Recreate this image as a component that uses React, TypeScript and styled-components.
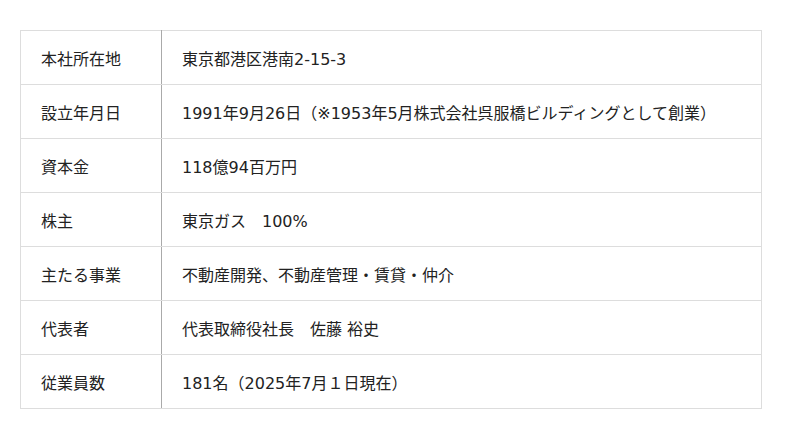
import React from 'react';
import styled, { createGlobalStyle } from 'styled-components';

const GlobalStyle = createGlobalStyle`
  body {
    margin: 0;
    background: #fff;
    font-family: "DejaVu Sans", "Noto Sans CJK JP", sans-serif;
    color: #222;
  }
`

const Wrapper = styled.div`
  padding: 30px 38px 30px 20px;
`

const Table = styled.table`
  width: 742px;
  border-collapse: collapse;
  font-family: "DejaVu Sans", "Noto Sans CJK JP", sans-serif;
  font-size: 16px;
  color: #222;
`

const Row = styled.tr`
  height: 54px;
`

const HeadCell = styled.th`
  width: 120px;
  padding: 0 0 0 20px;
  text-align: left;
  font-weight: normal;
  border: 1px solid #ddd;
  border-right: 1px solid #aaa;
`

const DataCell = styled.td`
  padding: 0 0 0 20px;
  border: 1px solid #ddd;
  border-left: 1px solid #aaa;
`

const rows: [string, string][] = [
    ['本社所在地', '東京都港区港南2-15-3'],
    ['設立年月日', '1991年9月26日（※1953年5月株式会社呉服橋ビルディングとして創業）'],
    ['資本金', '118億94百万円'],
    ['株主', '東京ガス　100%'],
    ['主たる事業', '不動産開発、不動産管理・賃貸・仲介'],
    ['代表者', '代表取締役社長　佐藤 裕史'],
    ['従業員数', '181名（2025年7月１日現在）'],
]

const App = () => {
    return (
        <Wrapper>
            <GlobalStyle />
            <Table>
                <tbody>
                    {rows.map(([label, value]) => (
                        <Row key={label}>
                            <HeadCell>{label}</HeadCell>
                            <DataCell>{value}</DataCell>
                        </Row>
                    ))}
                </tbody>
            </Table>
        </Wrapper>
    );
};

export default App;
